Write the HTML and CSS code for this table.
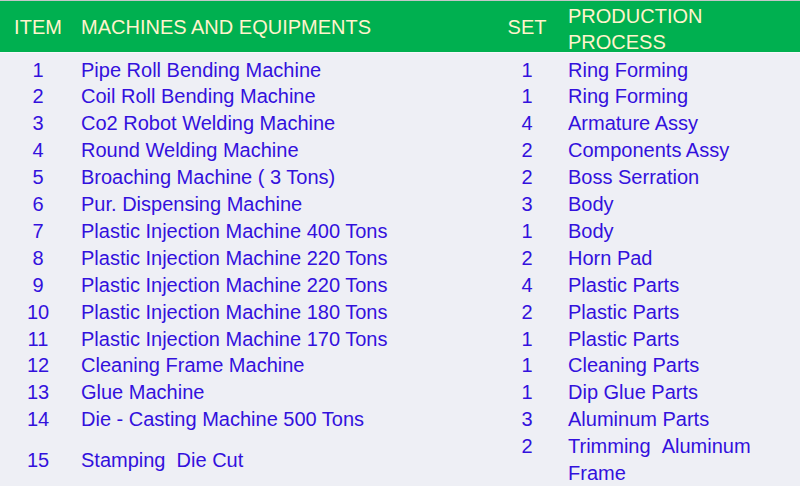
FILE: index.html
```html
<!DOCTYPE html>
<html>
<head>
<meta charset="utf-8">
<link rel="stylesheet" href="styles.css">
</head>
<body>
<table class="equip">
  <colgroup>
    <col class="c-item"><col class="c-mach"><col class="c-set"><col class="c-proc">
  </colgroup>
  <thead>
    <tr>
      <th class="item">ITEM</th>
      <th class="mach">MACHINES AND EQUIPMENTS</th>
      <th class="set">SET</th>
      <th class="proc"><span class="two-line">PRODUCTION<br>PROCESS</span></th>
    </tr>
  </thead>
  <tbody>
    <tr><td class="item">1</td><td class="mach">Pipe Roll Bending Machine</td><td class="set">1</td><td class="proc">Ring Forming</td></tr>
    <tr><td class="item">2</td><td class="mach">Coil Roll Bending Machine</td><td class="set">1</td><td class="proc">Ring Forming</td></tr>
    <tr><td class="item">3</td><td class="mach">Co2 Robot Welding Machine</td><td class="set">4</td><td class="proc">Armature Assy</td></tr>
    <tr><td class="item">4</td><td class="mach">Round Welding Machine</td><td class="set">2</td><td class="proc">Components Assy</td></tr>
    <tr><td class="item">5</td><td class="mach">Broaching Machine ( 3 Tons)</td><td class="set">2</td><td class="proc">Boss Serration</td></tr>
    <tr><td class="item">6</td><td class="mach">Pur. Dispensing Machine</td><td class="set">3</td><td class="proc">Body</td></tr>
    <tr><td class="item">7</td><td class="mach">Plastic Injection Machine 400 Tons</td><td class="set">1</td><td class="proc">Body</td></tr>
    <tr><td class="item">8</td><td class="mach">Plastic Injection Machine 220 Tons</td><td class="set">2</td><td class="proc">Horn Pad</td></tr>
    <tr><td class="item">9</td><td class="mach">Plastic Injection Machine 220 Tons</td><td class="set">4</td><td class="proc">Plastic Parts</td></tr>
    <tr><td class="item">10</td><td class="mach">Plastic Injection Machine 180 Tons</td><td class="set">2</td><td class="proc">Plastic Parts</td></tr>
    <tr><td class="item">11</td><td class="mach">Plastic Injection Machine 170 Tons</td><td class="set">1</td><td class="proc">Plastic Parts</td></tr>
    <tr><td class="item">12</td><td class="mach">Cleaning Frame Machine</td><td class="set">1</td><td class="proc">Cleaning Parts</td></tr>
    <tr><td class="item">13</td><td class="mach">Glue Machine</td><td class="set">1</td><td class="proc">Dip Glue Parts</td></tr>
    <tr><td class="item">14</td><td class="mach">Die - Casting Machine 500 Tons</td><td class="set">3</td><td class="proc">Aluminum Parts</td></tr>
    <tr class="tall"><td class="item">15</td><td class="mach">Stamping &nbsp;Die Cut</td><td class="set">2</td><td class="proc">Trimming &nbsp;Aluminum<br>Frame</td></tr>
  </tbody>
</table>
</body>
</html>
```
FILE: styles.css
```css
html, body {
  margin: 0;
  padding: 0;
  background: #eeeff5;
}
body {
  font-family: "Liberation Sans", Arial, sans-serif;
  font-size: 20px;
  overflow: hidden;
}
.equip {
  border-collapse: collapse;
  width: 800px;
  table-layout: fixed;
}
.c-item { width: 76px; }
.c-mach { width: 428px; }
.c-set { width: 46px; }
.c-proc { width: 250px; }

.equip th {
  background: #00b050;
  color: #fff4cc;
  font-weight: normal;
  height: 49px;
  padding: 2px 0 0 0;
  line-height: 25px;
  border-top: 1px solid #c4c6c8;
  border-bottom: 1px solid #f7f8fb;
  vertical-align: middle;
}
.two-line {
  display: block;
  line-height: 26px;
  margin: 0 0 -3px 0;
}
.equip td {
  color: #3311dd;
  line-height: 26.9px;
  padding: 0;
  vertical-align: middle;
}
.equip tbody tr:first-child td {
  padding-top: 3.5px;
}
.item { text-align: center; }
.mach { text-align: left; padding-left: 5px !important; }
.set { text-align: center; }
.proc { text-align: left; padding-left: 18px !important; }
.tall .set, .tall .proc { vertical-align: top; }
```
